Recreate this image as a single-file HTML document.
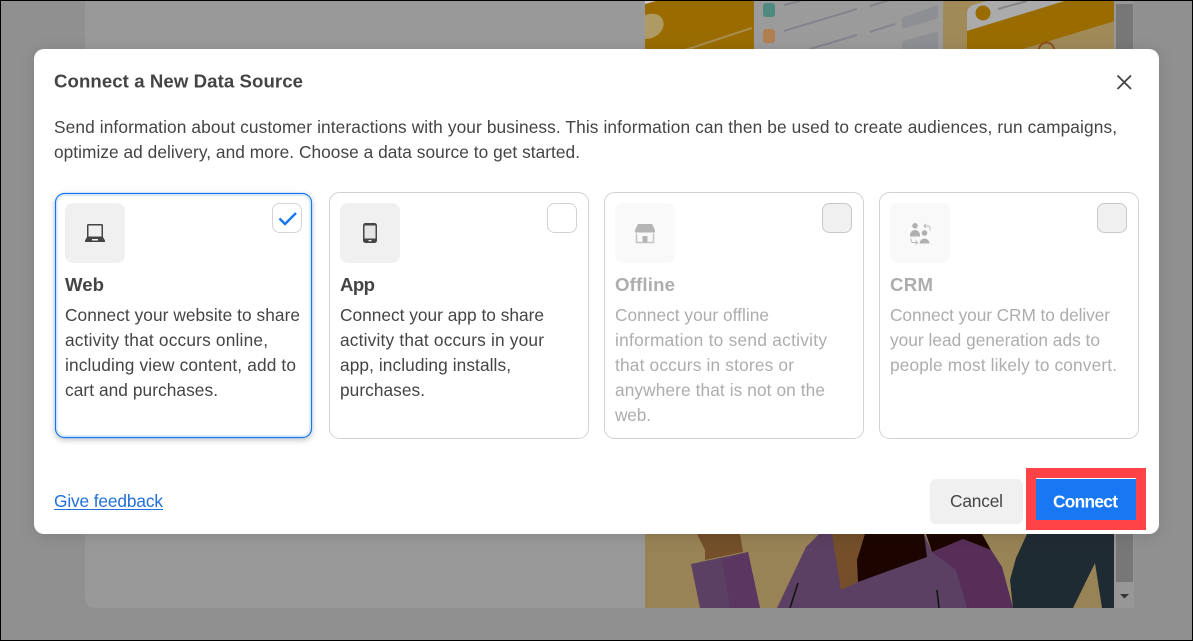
<!DOCTYPE html>
<html><head><meta charset="utf-8">
<style>
html,body{margin:0;padding:0;width:1193px;height:641px;overflow:hidden;background:#8f8f8f}
svg{display:block}
text{font-family:"Liberation Sans",sans-serif;font-size:17.3px;fill:#444;}
.b{font-weight:700}
.d{fill:#adadad}
.t{font-size:18.6px;font-weight:700}
</style></head>
<body>
<svg width="1193" height="641" viewBox="0 0 1193 641" xmlns="http://www.w3.org/2000/svg">
<defs>
<filter id="s" x="-5%" y="-5%" width="110%" height="110%"><feDropShadow dx="0" dy="2" stdDeviation="8" flood-color="#000" flood-opacity=".12"/></filter>
<filter id="s2" x="-10%" y="-10%" width="120%" height="120%"><feDropShadow dx="0" dy="2" stdDeviation="3" flood-color="#000" flood-opacity=".25"/></filter>
</defs>
<rect width="1193" height="641" fill="#909090"/>
<path d="M85 0H1134V598a10 10 0 0 1-10 10H95a10 10 0 0 1-10-10Z" fill="#999"/>
<!-- top art -->
<rect x="645" y="0" width="109" height="50" fill="#9a6c00"/>
<path d="M645 4L660 0H645Z" fill="#ccc"/>
<path d="M645 15Q654 12 660 16Q666 22 662 30Q656 39 645 39Z" fill="#ae9a63"/>
<path d="M685 50L752 28" stroke="#a98c4c" stroke-width="2"/>
<rect x="754" y="0" width="189" height="50" fill="#9b9b9b"/>
<rect x="763" y="3" width="12" height="14" rx="3" fill="#4f8a80"/>
<rect x="763" y="29" width="12" height="14" rx="3" fill="#b07f50"/>
<path d="M784 5L800 1M784 31L857 9M810 49L857 35M870 6L890 0M870 32L895 24" stroke="#82858a" stroke-width="2" fill="none"/>
<path d="M902 20Q902 18 904 17L935 6Q938 5 938 8V16Q938 18 936 19L905 28Q902 29 902 26ZM902 44Q902 42 904 41L935 32Q938 31 938 34V50H902Z" fill="#8e8f92"/>
<rect x="943" y="0" width="172" height="50" fill="#a08a58"/>
<path d="M967 31V12Q968 7 973 5L990 0H1068Z" fill="#ababab"/>
<path d="M967 31L1068 0H1115V21L1020 50H967Z" fill="#9a6c00"/>
<path d="M1020 50L1115 21V29L1053 50Z" fill="#a08a58"/>
<circle cx="983" cy="13" r="7.500" fill="#9a6c00"/>
<path d="M998 9L1027 1" stroke="#84868a" stroke-width="2"/>
<path d="M1039 50a7.500 7.500 0 0 1 15 0" fill="#a08a58" stroke="#8c4e1a" stroke-width="2"/>
<rect x="1114" y="0" width="20" height="608" fill="#979797"/>
<rect x="1116" y="4" width="17" height="578" fill="#777"/>
<path d="M1120 594H1129L1124.500 598.500Z" fill="#333"/>
<!-- bottom art -->
<rect x="645" y="534" width="469" height="74" fill="#978355"/>
<path d="M697 534H740L743 552 705 560 705 550Z" fill="#744f2a"/>
<path d="M691 564L748 552 760 608H700Z" fill="#5c4063"/>
<path d="M722 560L748 552 760 608H730Z" fill="#5a3660"/>
<path d="M777 608L806 547 819 534H924L932 552 963 539 991 550 1002 567 1013 608Z" fill="#5c4063"/>
<path d="M932 552L963 539 991 550 1002 567 1013 608H967L956 570Z" fill="#562e58"/>
<path d="M832 534H865L857 560 858 582 841 590Z" fill="#744f2a"/>
<path d="M865 534H924L927 557 858 582 857 560Z" fill="#1c0500"/>
<path d="M926 534H982L991 550 963 539 932 552Z" fill="#1c0500"/>
<path d="M1027 534H1114V608H1102L1095 563 1073 608H1013L1010 580 1016 558Z" fill="#1f2b33"/>
<path d="M798 583L790 608M937 590L939 608" stroke="#111" stroke-width="1.500" fill="none"/>
<!-- frame -->
<path d="M0.500 0.500H1192.500V640.500H0.500Z" fill="none" stroke="#000" stroke-width="1"/>
<!-- modal -->
<rect x="34" y="49" width="1125" height="485" rx="10" fill="#fff" filter="url(#s)"/>
<text x="54" y="87.500" class="t" textLength="249">Connect a New Data Source</text>
<path d="M1117.500 75.500L1131 89M1131 75.500L1117.500 89" stroke="#444" stroke-width="1.800" fill="none"/>
<text x="54" y="133" textLength="1063">Send information about customer interactions with your business. This information can then be used to create audiences, run campaigns,</text>
<text x="54" y="158" textLength="526">optimize ad delivery, and more. Choose a data source to get started.</text>
<!-- Web card -->
<rect x="55.500" y="193.500" width="256" height="244" rx="9" fill="#fff" stroke="#1877f2" stroke-width="1.200" filter="url(#s2)"/>
<rect x="57" y="195" width="253" height="241" rx="8" fill="#fff" stroke="#d6e6fb" stroke-width="1.500"/>
<rect x="65" y="203" width="60" height="60" rx="8" fill="#f0f0f0"/>
<path d="M87 225.500a1.500 1.500 0 0 1 1.500-1.500h13a1.500 1.500 0 0 1 1.500 1.500V237l2 3.500v1.500H85v-1.500l2-3.500Z" fill="#444"/>
<rect x="88.500" y="225.500" width="13" height="11" fill="#f0f0f0"/>
<rect x="92" y="239" width="6" height="1.500" fill="#f0f0f0"/>
<rect x="272.500" y="203.500" width="29" height="29" rx="7" fill="#fff" stroke="#d4d4d4"/>
<path d="M279.500 218.500L285 224L296 213" stroke="#1877f2" stroke-width="2.400" fill="none"/>
<text x="65" y="291" class="t" textLength="39">Web</text>
<text x="65" y="321" textLength="235">Connect your website to share</text>
<text x="65" y="346" textLength="203">activity that occurs online,</text>
<text x="65" y="371" textLength="231">including view content, add to</text>
<text x="65" y="396" textLength="153">cart and purchases.</text>
<!-- App card -->
<rect x="329.500" y="192.500" width="259" height="246" rx="10" fill="#fff" stroke="#d2d2d2"/>
<rect x="340" y="203" width="60" height="60" rx="8" fill="#f0f0f0"/>
<rect x="363" y="223" width="14" height="20" rx="2.500" fill="#444"/>
<rect x="364.500" y="225.500" width="11" height="13" fill="#e4e4e4"/>
<rect x="368.500" y="240" width="3" height="1.300" fill="#f0f0f0"/>
<rect x="547.500" y="203.500" width="29" height="29" rx="7" fill="#fff" stroke="#d2d2d2"/>
<text x="340" y="291" class="t" textLength="35">App</text>
<text x="340" y="321" textLength="204">Connect your app to share</text>
<text x="340" y="346" textLength="204">activity that occurs in your</text>
<text x="340" y="371" textLength="171">app, including installs,</text>
<text x="340" y="396" textLength="85">purchases.</text>
<!-- Offline card -->
<rect x="604.500" y="192.500" width="259" height="246" rx="10" fill="#fff" stroke="#d2d2d2"/>
<rect x="615" y="203" width="60" height="60" rx="8" fill="#f9f9f9"/>
<path d="M638 224h14l3 6v2.500h-20V230Z" fill="#b5b5b5"/>
<path d="M636.500 233.500V242.500H653.500V233.500" fill="none" stroke="#c4c4c4" stroke-width="1.500"/>
<rect x="642.500" y="236" width="5" height="6.500" fill="#b5b5b5"/>
<rect x="822.500" y="203.500" width="29" height="29" rx="7" fill="#f0f0f0" stroke="#c8c8c8"/>
<text x="615" y="291" class="t d" textLength="60">Offline</text>
<text x="615" y="321" class="d" textLength="154">Connect your offline</text>
<text x="615" y="346" class="d" textLength="212">information to send activity</text>
<text x="615" y="371" class="d" textLength="179">that occurs in stores or</text>
<text x="615" y="396" class="d" textLength="210">anywhere that is not on the</text>
<text x="615" y="421" class="d" textLength="36">web.</text>
<!-- CRM card -->
<rect x="879.500" y="192.500" width="259" height="246" rx="10" fill="#fff" stroke="#d2d2d2"/>
<rect x="890" y="203" width="60" height="60" rx="8" fill="#f9f9f9"/>
<circle cx="915" cy="225.800" r="2.800" fill="#b0b0b0"/>
<path d="M910 235a5 5 0 0 1 10 0v1.500h-10Z" fill="#b0b0b0"/>
<circle cx="924.500" cy="233" r="2.800" fill="#b0b0b0"/>
<path d="M919.500 243.500a5 5 0 0 1 10 0Z" fill="#b0b0b0"/>
<path d="M930 230.500v-2.500a2 2 0 0 0-2-2h-4M926 224l-2 2 2 2M911 238.500v2a2 2 0 0 0 2 2h4M915.500 240.500l2 2-2 2" fill="none" stroke="#b8b8b8" stroke-width="1"/>
<rect x="1097.500" y="203.500" width="29" height="29" rx="7" fill="#f0f0f0" stroke="#c8c8c8"/>
<text x="890" y="291" class="t d" textLength="43">CRM</text>
<text x="890" y="321" class="d" textLength="220">Connect your CRM to deliver</text>
<text x="890" y="346" class="d" textLength="210">your lead generation ads to</text>
<text x="890" y="371" class="d" textLength="227">people most likely to convert.</text>
<!-- footer -->
<text x="54" y="507" textLength="109" style="fill:#216fdb">Give feedback</text>
<rect x="54" y="509" width="109" height="1" fill="#216fdb"/>
<rect x="930" y="479" width="93" height="45" rx="6" fill="#f0f0f0"/>
<text x="950" y="507" textLength="53">Cancel</text>
<rect x="1031" y="473" width="110" height="52" fill="none" stroke="#ff4245" stroke-width="10"/>
<rect x="1036" y="478" width="100" height="1" fill="#fff"/>
<rect x="1036" y="479" width="100" height="41" fill="#1877f2"/>
<text x="1053" y="507.500" class="b" textLength="65" style="fill:#fff">Connect</text>
</svg>
</body></html>
